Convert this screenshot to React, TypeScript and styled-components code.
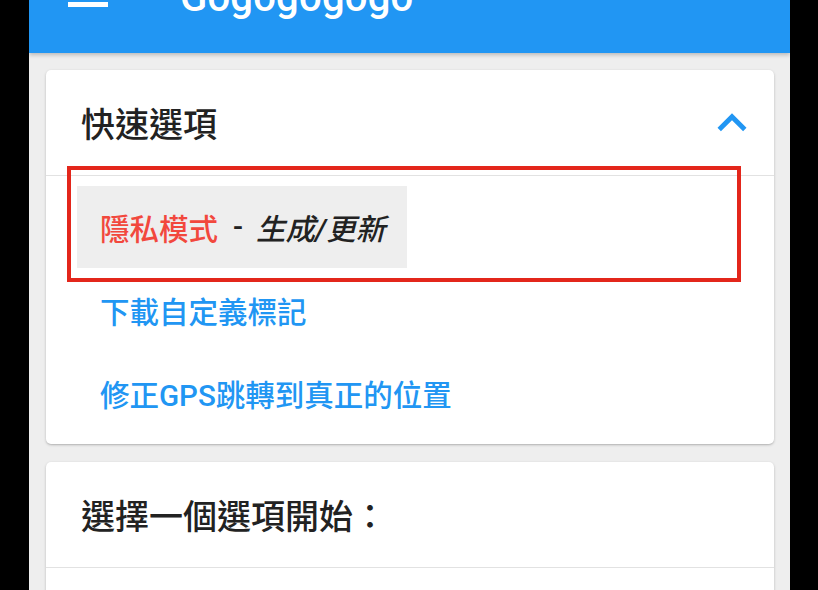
import React from "react";
import styled, { createGlobalStyle } from "styled-components";

const Global = createGlobalStyle`
  html, body { margin: 0; padding: 0; background: #000; }
  body { font-family: Roboto, "Noto Sans CJK TC", sans-serif; overflow: hidden; }
`;

const Screen = styled.div`
  width: 761px;
  height: 590px;
  margin-left: 29px;
  background: #eeeeee;
  overflow: hidden;
  display: flex;
  flex-direction: column;
`;

const AppBar = styled.header`
  height: 112px;
  margin-top: -59px;
  background: #2196f3;
  box-shadow: 0 2px 4px rgba(0, 0, 0, 0.22);
  display: flex;
  align-items: center;
  padding-left: 39px;
  gap: 72px;
  flex-shrink: 0;
  position: relative;
  z-index: 1;
`;

const MenuIcon = styled.svg`
  width: 40px;
  height: 27px;
  margin-top: -7px;
  flex-shrink: 0;
`;

const AppTitle = styled.h1`
  margin: 0;
  color: #fff;
  font-family: Roboto, sans-serif;
  font-weight: 500;
  font-size: 40px;
  letter-spacing: 0.2px;
`;

const Content = styled.main`
  display: flex;
  flex-direction: column;
  gap: 18px;
  padding: 17px 16px 0 17px;
`;

const Card = styled.section`
  position: relative;
  background: #fff;
  border-radius: 5px;
  box-shadow: 0 1px 3px rgba(0, 0, 0, 0.2), 0 1px 1px rgba(0, 0, 0, 0.08);
  flex-shrink: 0;
`;

const CardHeader = styled.div`
  height: 105px;
  display: flex;
  align-items: center;
  justify-content: space-between;
  padding: 0 13px 0 35px;
  border-bottom: 1px solid #e2e2e2;
`;

const CardTitle = styled.h2`
  margin: 0;
  font-size: 34px;
  font-weight: 500;
  color: #222;
  font-family: "Noto Sans CJK TC", sans-serif;
`;

const Chevron = styled.svg`
  width: 58px;
  height: 58px;
  fill: #2196f3;
`;

const List = styled.div`
  display: flex;
  flex-direction: column;
  align-items: flex-start;
  gap: 1px;
  padding: 10px 0 10px 31px;
`;

const CardBody = styled.div`
  height: 120px;
`;

const Item = styled.div<{ $active?: boolean }>`
  height: 82px;
  display: flex;
  align-items: center;
  padding: 0 22px 0 23px;
  background: ${(p) => (p.$active ? "#eeeeee" : "transparent")};
  font-size: 29.5px;
  font-weight: 500;
  color: #2196f3;
  white-space: pre;
`;

const Danger = styled.span`
  color: #f2483d;
`;

const Dash = styled.span`
  color: #222;
  padding: 0 13px 0 15px;
`;

const Slanted = styled.span`
  color: #222;
  font-style: italic;
`;

const Annotation = styled.div`
  position: absolute;
  left: 21px;
  top: 96px;
  width: 674px;
  height: 116px;
  box-sizing: border-box;
  border: 4px solid #e3261b;
  pointer-events: none;
`;

export default function App() {
  return (
    <>
      <Global />
      <Screen>
        <AppBar>
          <MenuIcon viewBox="0 0 40 27">
            <rect x="0" y="0" width="40" height="5" fill="#fff" />
            <rect x="0" y="11" width="40" height="5" fill="#fff" />
            <rect x="0" y="22" width="40" height="5" fill="#fff" />
          </MenuIcon>
          <AppTitle>Gogogogogo</AppTitle>
        </AppBar>
        <Content>
          <Card>
            <CardHeader>
              <CardTitle>快速選項</CardTitle>
              <Chevron viewBox="0 0 24 24">
                <path d="M12 8l-6 6 1.41 1.41L12 10.83l4.59 4.58L18 14z" />
              </Chevron>
            </CardHeader>
            <List>
              <Item $active>
                <Danger>隱私模式</Danger>
                <Dash>-</Dash>
                <Slanted>生成/更新</Slanted>
              </Item>
              <Item>下載自定義標記</Item>
              <Item>修正GPS跳轉到真正的位置</Item>
            </List>
            <Annotation />
          </Card>
          <Card>
            <CardHeader>
              <CardTitle>選擇一個選項開始：</CardTitle>
            </CardHeader>
            <CardBody />
          </Card>
        </Content>
      </Screen>
    </>
  );
}
